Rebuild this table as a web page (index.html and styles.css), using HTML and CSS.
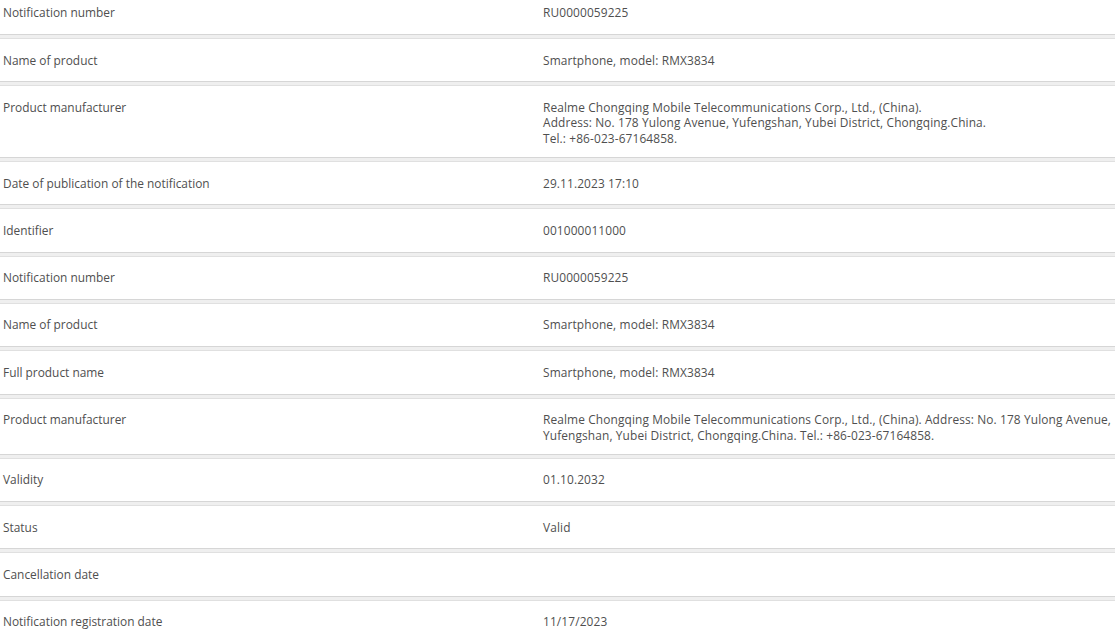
FILE: index.html
```html
<!DOCTYPE html>
<html lang="en">
<head>
<meta charset="utf-8">
<title>Notification</title>
<link rel="stylesheet" href="styles.css">
</head>
<body>
<div class="table">
  <div class="row"><div class="label">Notification number</div><div class="value">RU0000059225</div></div>
  <div class="row"><div class="label">Name of product</div><div class="value">Smartphone, model: RMX3834</div></div>
  <div class="row"><div class="label">Product manufacturer</div><div class="value">Realme Chongqing Mobile Telecommunications Corp., Ltd., (China).<br>Address: No. 178 Yulong Avenue, Yufengshan, Yubei District, Chongqing.China.<br>Tel.: +86-023-67164858.</div></div>
  <div class="row"><div class="label">Date of publication of the notification</div><div class="value">29.11.2023 17:10</div></div>
  <div class="row"><div class="label">Identifier</div><div class="value">001000011000</div></div>
  <div class="row"><div class="label">Notification number</div><div class="value">RU0000059225</div></div>
  <div class="row"><div class="label">Name of product</div><div class="value">Smartphone, model: RMX3834</div></div>
  <div class="row"><div class="label">Full product name</div><div class="value">Smartphone, model: RMX3834</div></div>
  <div class="row"><div class="label">Product manufacturer</div><div class="value">Realme Chongqing Mobile Telecommunications Corp., Ltd., (China). Address: No. 178 Yulong Avenue, Yufengshan, Yubei District, Chongqing.China. Tel.: +86-023-67164858.</div></div>
  <div class="row"><div class="label">Validity</div><div class="value">01.10.2032</div></div>
  <div class="row"><div class="label">Status</div><div class="value">Valid</div></div>
  <div class="row"><div class="label">Cancellation date</div><div class="value"></div></div>
  <div class="row"><div class="label">Notification registration date</div><div class="value">11/17/2023</div></div>
</div>
</body>
</html>
```
FILE: styles.css
```css
html, body {
  margin: 0;
  padding: 0;
  background: #efefef;
}
body {
  font-family: "Open Sans", "Liberation Sans", Arial, sans-serif;
  font-size: 11.9px;
  color: #4f4f4f;
  overflow: hidden;
}
.table {
  margin-top: -9.15px;
}
.row {
  display: grid;
  grid-template-columns: 540px 1fr;
  box-sizing: border-box;
  min-height: 44.3px;
  padding: 13.4px 2px 10.8px 3px;
  background: #fff;
  border-top: 1px solid #e0e0e0;
  border-bottom: 1px solid #d6d6d6;
  margin-bottom: 3px;
  line-height: 15.5px;
}
.label, .value {
  min-width: 0;
}
.value {
  letter-spacing: 0.12px;
}
```
